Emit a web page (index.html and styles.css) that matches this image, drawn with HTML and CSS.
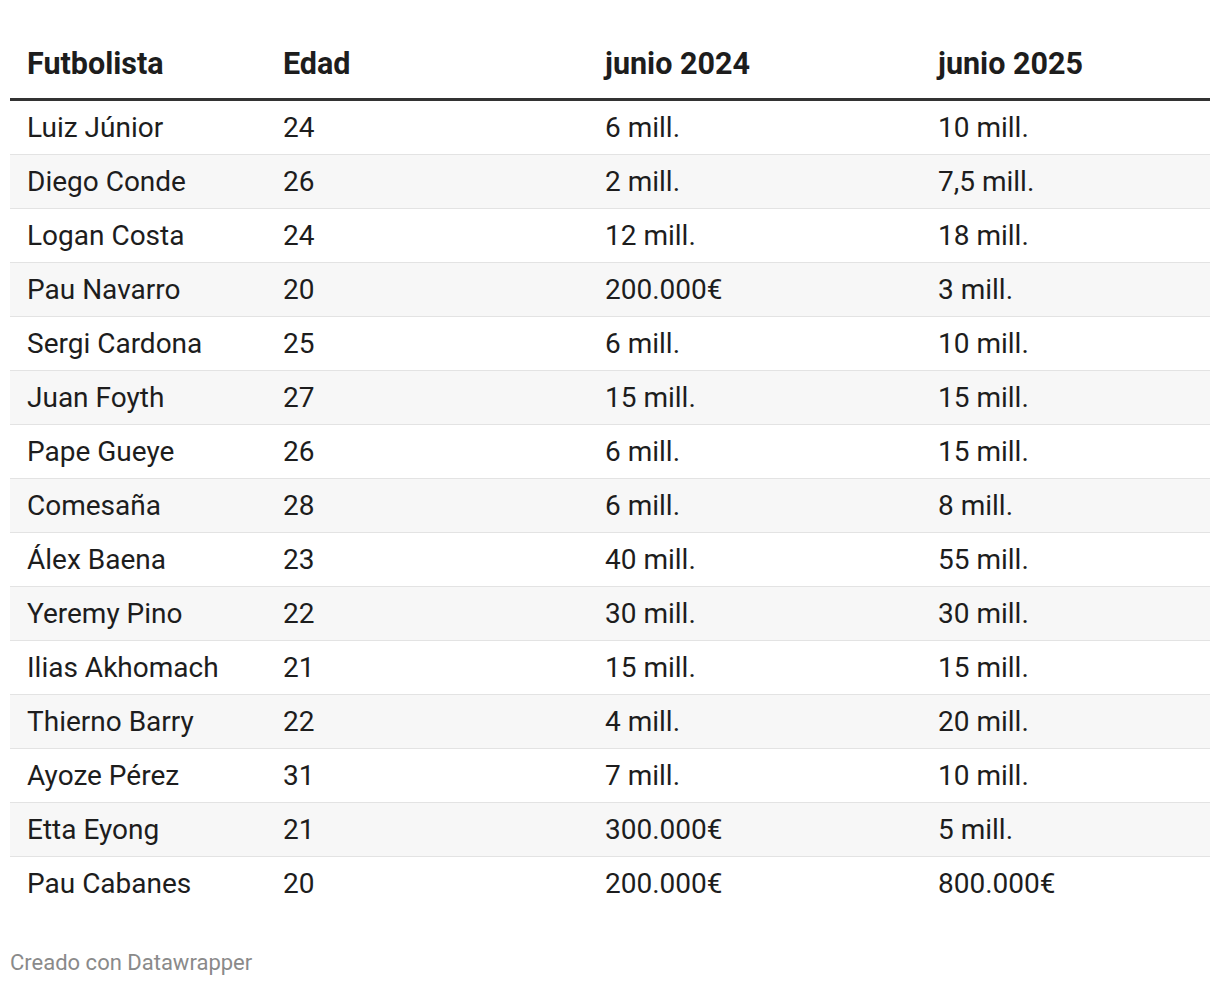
FILE: index.html
```html
<!DOCTYPE html>
<html lang="es">
<head>
<meta charset="utf-8">
<title>Tabla</title>
<link rel="stylesheet" href="styles.css">
</head>
<body>
<div class="wrap">
<table class="tbl">
<thead>
<tr><th class="c1">Futbolista</th><th class="c2">Edad</th><th class="c3">junio 2024</th><th class="c4">junio 2025</th></tr>
</thead>
<tbody>
<tr><td>Luiz Júnior</td><td>24</td><td>6 mill.</td><td>10 mill.</td></tr>
<tr><td>Diego Conde</td><td>26</td><td>2 mill.</td><td>7,5 mill.</td></tr>
<tr><td>Logan Costa</td><td>24</td><td>12 mill.</td><td>18 mill.</td></tr>
<tr><td>Pau Navarro</td><td>20</td><td>200.000€</td><td>3 mill.</td></tr>
<tr><td>Sergi Cardona</td><td>25</td><td>6 mill.</td><td>10 mill.</td></tr>
<tr><td>Juan Foyth</td><td>27</td><td>15 mill.</td><td>15 mill.</td></tr>
<tr><td>Pape Gueye</td><td>26</td><td>6 mill.</td><td>15 mill.</td></tr>
<tr><td>Comesaña</td><td>28</td><td>6 mill.</td><td>8 mill.</td></tr>
<tr><td>Álex Baena</td><td>23</td><td>40 mill.</td><td>55 mill.</td></tr>
<tr><td>Yeremy Pino</td><td>22</td><td>30 mill.</td><td>30 mill.</td></tr>
<tr><td>Ilias Akhomach</td><td>21</td><td>15 mill.</td><td>15 mill.</td></tr>
<tr><td>Thierno Barry</td><td>22</td><td>4 mill.</td><td>20 mill.</td></tr>
<tr><td>Ayoze Pérez</td><td>31</td><td>7 mill.</td><td>10 mill.</td></tr>
<tr><td>Etta Eyong</td><td>21</td><td>300.000€</td><td>5 mill.</td></tr>
<tr><td>Pau Cabanes</td><td>20</td><td>200.000€</td><td>800.000€</td></tr>
</tbody>
</table>
<div class="foot">Creado con Datawrapper</div>
</div>
</body>
</html>
```
FILE: styles.css
```css
html, body {
  margin: 0;
  padding: 0;
  background: #fff;
}
body {
  font-family: Roboto, "Liberation Sans", sans-serif;
  color: #1d1d1d;
}
.wrap {
  padding: 34px 10px 0 10px;
}
.tbl {
  width: 1200px;
  border-collapse: collapse;
  table-layout: fixed;
}
.c1 { width: 256px; }
.c2 { width: 322px; }
.c3 { width: 333px; }
.c4 { width: 289px; }
.tbl th {
  text-align: left;
  font-weight: 700;
  font-size: 30.5px;
  line-height: 60px;
  height: 64px;
  padding: 0 0 4px 17px;
  border-bottom: 3px solid #333;
  vertical-align: middle;
  box-sizing: border-box;
  color: #1d1d1d;
}
.tbl td {
  font-size: 28px;
  height: 53px;
  padding: 1px 0 0 17px;
  border-bottom: 1px solid #e3e3e3;
  vertical-align: middle;
  line-height: 52px;
  white-space: nowrap;
  box-sizing: border-box;
}
.tbl tbody tr:nth-child(even) td {
  background: #f7f7f7;
}
.tbl tbody tr:last-child td {
  border-bottom: none;
}
.foot {
  margin-top: 41px;
  font-size: 22px;
  color: #8a8a8a;
  line-height: 24px;
}
```
